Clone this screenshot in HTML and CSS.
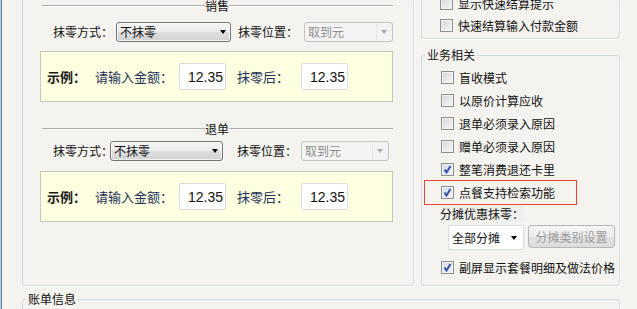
FILE: index.html
```html
<!DOCTYPE html>
<html lang="zh-CN">
<head>
    <meta charset="UTF-8">
    <title>抹零设置</title>
    <link rel="stylesheet" href="styles.css">
</head>
<body>
    <div class="window">
        <div class="top">
            <div class="panel">
                <div class="sect-title"><span class="line line-left"></span><span>销售</span><span class="line"></span></div>
                <div class="round-row row-sale">
                    <span class="lbl lbl-mode">抹零方式：</span>
                    <div class="combo combo-mode"><span>不抹零</span><i class="arrow"></i></div>
                    <span class="lbl lbl-pos">抹零位置：</span>
                    <div class="combo combo-off combo-pos"><span>取到元</span><i class="arrow"></i></div>
                </div>
                <div class="sample">
                    <b class="sample-title">示例：</b>
                    <span class="sample-in">请输入金额：</span>
                    <input class="amount" type="text" value="12.35">
                    <span class="sample-out">抹零后：</span>
                    <input class="amount" type="text" value="12.35">
                </div>

                <div class="sect-title sect-refund"><span class="line line-left"></span><span>退单</span><span class="line"></span></div>
                <div class="round-row row-refund">
                    <span class="lbl lbl-mode">抹零方式：</span>
                    <div class="combo combo-mode"><span>不抹零</span><i class="arrow"></i></div>
                    <span class="lbl lbl-pos">抹零位置：</span>
                    <div class="combo combo-off combo-pos"><span>取到元</span><i class="arrow"></i></div>
                </div>
                <div class="sample">
                    <b class="sample-title">示例：</b>
                    <span class="sample-in">请输入金额：</span>
                    <input class="amount" type="text" value="12.35">
                    <span class="sample-out">抹零后：</span>
                    <input class="amount" type="text" value="12.35">
                </div>
            </div>

            <div class="side">
                <div class="quick-group">
                    <label class="check first"><span class="cb"></span>显示快速结算提示</label>
                    <label class="check"><span class="cb"></span>快速结算输入付款金额</label>
                </div>

                <fieldset class="group biz">
                    <legend>业务相关</legend>
                    <div class="check-list">
                        <label class="check"><span class="cb"></span>盲收模式</label>
                        <label class="check"><span class="cb"></span>以原价计算应收</label>
                        <label class="check"><span class="cb"></span>退单必须录入原因</label>
                        <label class="check"><span class="cb"></span>赠单必须录入原因</label>
                        <label class="check"><span class="cb checked"><svg viewBox="0 0 13 13" width="13" height="13"><path d="M3.5 6.5 L5.5 9.5 L9.5 3" fill="none" stroke="#3550a8" stroke-width="2"/></svg></span>整笔消费退还卡里</label>
                        <label class="check marked"><span class="cb checked"><svg viewBox="0 0 13 13" width="13" height="13"><path d="M3.5 6.5 L5.5 9.5 L9.5 3" fill="none" stroke="#3550a8" stroke-width="2"/></svg></span>点餐支持检索功能</label>
                    </div>
                    <div class="split-lbl">分摊优惠抹零：</div>
                    <div class="split-row">
                        <div class="combo combo-split"><span>全部分摊</span><i class="arrow"></i></div>
                        <button class="btn" type="button" disabled>分摊类别设置</button>
                    </div>
                    <label class="check last"><span class="cb checked"><svg viewBox="0 0 13 13" width="13" height="13"><path d="M3.5 6.5 L5.5 9.5 L9.5 3" fill="none" stroke="#3550a8" stroke-width="2"/></svg></span>副屏显示套餐明细及做法价格</label>
                </fieldset>
            </div>
        </div>

        <fieldset class="group bill">
            <legend>账单信息</legend>
        </fieldset>
    </div>
</body>
</html>
```

FILE: styles.css
```css
html {
    background-color: #f4f3f0;
}

body {
    margin: 0;
    font-family: "Noto Sans CJK SC", "Liberation Sans", sans-serif;
    font-size: 12px;
    color: #111;
}

.window {
    margin-left: 1px;
    height: 309px;
    border-left: 1px solid #5f7fa6;
    box-shadow: -1px 0 0 #b9c7d8;
    overflow: hidden;
}

.top {
    display: flex;
    height: 286px;
    padding-left: 20px;
}

/* left panel */
.panel {
    width: 392px;
    flex: none;
    border: 1px solid #d3dbe1;
    border-top: none;
    border-radius: 0 0 3px 3px;
    box-shadow: 1px 1px 0 #fff;
    padding: 0 20px 0 19px;
    box-sizing: border-box;
}

.sect-title {
    display: flex;
    align-items: center;
    height: 12px;
    line-height: 12px;
    font-size: 12px;
}

.sect-title .line {
    flex: 1;
    height: 0;
    border-top: 1px solid #a9a9a9;
    border-bottom: 1px solid #fff;
}

.sect-title .line-left {
    flex: none;
    width: 163px;
}

.sect-refund {
    margin-top: 21px;
}

.round-row {
    display: flex;
    align-items: center;
    height: 20px;
    padding-left: 11px;
    margin-top: 10px;
}

.row-refund {
    margin-top: 6px;
}

.lbl {
    display: block;
    flex: none;
    line-height: 20px;
    white-space: nowrap;
}

.combo {
    flex: none;
}

.row-sale .lbl-mode { width: 63px; }
.row-sale .combo-mode { width: 115px; }
.row-sale .lbl-pos { width: 66px; margin-left: 7px; }
.row-sale .combo-pos { width: 89px; }

.row-refund .lbl-mode { width: 57px; }
.row-refund .combo-mode { width: 113px; }
.row-refund .lbl-pos { width: 64px; margin-left: 14px; }
.row-refund .combo-pos { width: 88px; }

.combo {
    display: flex;
    align-items: center;
    justify-content: space-between;
    height: 20px;
    box-sizing: border-box;
    border: 1px solid #767676;
    border-radius: 3px;
    background: linear-gradient(#f5f5f5, #ebebeb 50%, #dedede 51%, #d2d2d2);
    box-shadow: inset 0 0 0 1px rgba(255, 255, 255, 0.7);
    padding: 0 4px 0 3px;
    line-height: 18px;
    white-space: nowrap;
}

.arrow {
    display: block;
    width: 0;
    height: 0;
    border-top: 4px solid #000;
    border-left: 3.5px solid transparent;
    border-right: 3.5px solid transparent;
}

.combo-off {
    border-color: #c4c4c4;
    background: #f3f3f3;
    box-shadow: none;
    color: #8e8e8e;
    padding-right: 0;
}

.combo-off .arrow {
    width: 16px;
    height: 16px;
    box-sizing: border-box;
    border: none;
    border-left: 1px solid #e4e4e4;
    position: relative;
}

.combo-off .arrow::after {
    content: "";
    position: absolute;
    left: 4px;
    top: 6px;
    border-top: 4px solid #a9a9a9;
    border-left: 3.5px solid transparent;
    border-right: 3.5px solid transparent;
}

/* yellow sample box */
.sample {
    display: flex;
    align-items: center;
    width: 353px;
    height: 51px;
    box-sizing: border-box;
    margin: 9px 0 0 -2px;
    padding-left: 6px;
    border: 1px solid #c6c6bd;
    background-color: #ffffe1;
    font-size: 13px;
    white-space: nowrap;
}

.row-refund + .sample {
    margin-top: 10px;
}

.sample-title {
    flex: none;
    width: 48px;
    color: #161616;
}

.sample-in {
    flex: none;
    width: 84px;
    color: #22305c;
}

.sample-out {
    flex: none;
    width: 64px;
    color: #22305c;
}

.amount {
    flex: none;
    width: 47px;
    height: 27px;
    box-sizing: border-box;
    border: 1px solid #dcdcdc;
    border-radius: 2px;
    background: #fff;
    padding: 0 0 0 8px;
    margin: 0 11px 0 0;
    font-family: "Liberation Sans", sans-serif;
    font-size: 14px;
    color: #111;
}

/* right side */
.side {
    display: flex;
    flex-direction: column;
    width: 199px;
    flex: none;
    margin-left: 7px;
}

.quick-group {
    height: 39px;
    box-sizing: border-box;
    border: 1px solid #d3dbe1;
    border-top: none;
    border-radius: 0 0 3px 3px;
    box-shadow: 1px 1px 0 #fff;
}

.check {
    display: flex;
    align-items: center;
    height: 22px;
    padding-left: 18px;
    white-space: nowrap;
}

.quick-group .first {
    margin-top: -8px;
}

.cb {
    display: block;
    width: 13px;
    height: 13px;
    box-sizing: border-box;
    margin-right: 5px;
    border: 1px solid #8f8f8f;
    background: linear-gradient(135deg, #d8d8d8, #f6f6f6);
    box-shadow: inset 0 0 0 1px #f2f2f2;
    flex: none;
}

.cb svg {
    display: block;
    margin: -1px 0 0 -1px;
}

.cb.checked {
    background: linear-gradient(135deg, #d3d9e6, #f6f7f9);
}

.group {
    margin: 0;
    padding: 0;
    border: 1px solid #d3dbe1;
    border-radius: 3px;
    box-shadow: 1px 1px 0 #fff;
    min-width: 0;
}

.group legend {
    margin-left: 3px;
    padding: 0 2px;
    line-height: 14px;
    font-size: 12px;
}

.biz {
    flex: 1;
    margin-top: 9px;
}

.check-list {
    padding-top: 4px;
}

.check-list .check {
    height: 23px;
    width: 153px;
    box-sizing: border-box;
    margin-left: 2px;
    padding-left: 16px;
    border: 1px solid transparent;
}

.check-list .marked {
    height: 25px;
    margin: -1px 0 -1px 2px;
    border-color: #e8433b;
}

.split-lbl {
    width: 84px;
    height: 16px;
    line-height: 16px;
    margin: 2px 0 0 18px;
    background-color: #eeeeec;
    white-space: nowrap;
}

.split-row {
    display: flex;
    align-items: flex-start;
    margin: 3px 0 0 26px;
}

.combo-split {
    width: 76px;
    height: 25px;
    border: 1px solid #d9dee3;
    border-radius: 0;
    background: #fff;
    box-shadow: none;
    padding: 0 6px 0 3px;
    line-height: 23px;
}

.btn {
    width: 87px;
    height: 23px;
    margin-left: 4px;
    padding: 0;
    border: 1px solid #b5b8ba;
    border-radius: 3px;
    background: linear-gradient(#f5f5f5, #ececec 50%, #e2e2e2 51%, #dcdcdc);
    font-family: inherit;
    font-size: 12px;
    color: #9a9a9a;
}

.biz .last {
    height: 23px;
    margin-top: 6px;
    padding-left: 19px;
}

/* bottom group */
.bill {
    width: 598px;
    height: 40px;
    margin: 6px 0 0 20px;
    box-sizing: border-box;
}
```
